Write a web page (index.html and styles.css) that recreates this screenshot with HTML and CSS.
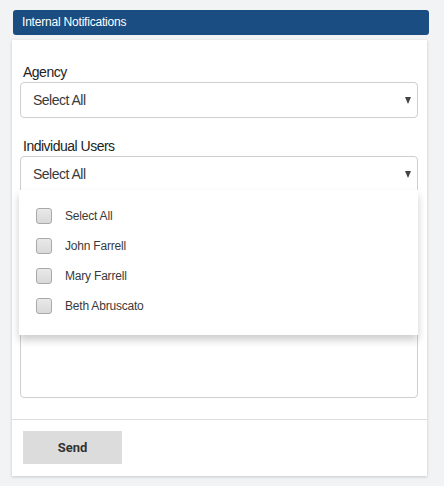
FILE: index.html
```html
<!DOCTYPE html>
<html lang="en">
<head>
    <meta charset="UTF-8">
    <meta name="viewport" content="width=device-width, initial-scale=1.0">
    <title>Internal Notifications</title>
    <link rel="stylesheet" href="styles.css">
</head>
<body>
    <div class="panel-title">Internal Notifications</div>
    <div class="card">
        <div class="card-body">
            <div class="field">
                <label class="field-label">Agency</label>
                <div class="select">
                    <span>Select All</span>
                    <span class="caret"></span>
                </div>
            </div>
            <div class="field users">
                <label class="field-label">Individual Users</label>
                <div class="select open">
                    <span>Select All</span>
                    <span class="caret"></span>
                </div>
                <div class="dropdown">
                    <label class="option"><span class="check"></span>Select All</label>
                    <label class="option"><span class="check"></span>John Farrell</label>
                    <label class="option"><span class="check"></span>Mary Farrell</label>
                    <label class="option"><span class="check"></span>Beth Abruscato</label>
                </div>
            </div>
            <div class="message"></div>
        </div>
        <div class="card-footer">
            <button type="button" class="send">Send</button>
        </div>
    </div>
</body>
</html>
```

FILE: styles.css
```css
body {
    margin: 0;
    padding: 10px 15px 10px 12px;
    background-color: #f2f3f5;
    font-family: 'Liberation Sans', Arial, sans-serif;
    color: #333;
}
.panel-title {
    margin-left: 1px;
    height: 25px;
    line-height: 25px;
    padding-left: 9px;
    background-color: #1a4d81;
    border-radius: 3px;
    color: #fff;
    font-size: 12px;
    letter-spacing: -0.2px;
}
.card {
    margin-top: 5px;
    width: 415px;
    background-color: #fff;
    box-shadow: 0 1px 3px rgba(0, 0, 0, 0.18);
}
.card-body {
    padding: 22px 9px 21px 8px;
}
.field {
    margin-bottom: 18px;
}
.field-label {
    display: block;
    padding-left: 3px;
    height: 20px;
    line-height: 20px;
    font-size: 14px;
    letter-spacing: -0.5px;
    color: #222;
}
.select {
    display: flex;
    align-items: center;
    justify-content: space-between;
    height: 34px;
    padding: 0 6px 0 12px;
    border: 1px solid #cfcfcf;
    border-radius: 4px;
    font-size: 14px;
    letter-spacing: -0.5px;
    color: #3a3a3a;
}
.select.open {
    border-bottom-left-radius: 0;
    border-bottom-right-radius: 0;
}
.caret {
    width: 0;
    height: 0;
    border-left: 3.5px solid transparent;
    border-right: 3.5px solid transparent;
    border-top: 7px solid #444;
}
.users {
    position: relative;
}
.dropdown {
    position: absolute;
    left: -1px;
    right: 0;
    top: 54px;
    padding: 11px 0 14px;
    background-color: #fff;
    box-shadow: 0 5px 8px rgba(0, 0, 0, 0.2);
    z-index: 2;
}
.option {
    display: flex;
    align-items: center;
    height: 30px;
    padding-left: 17px;
    font-size: 12px;
    letter-spacing: -0.2px;
    color: #3a3a3a;
}
.check {
    width: 14px;
    height: 14px;
    margin-right: 13px;
    border: 1px solid #a9a9a9;
    border-radius: 3px;
    background: linear-gradient(#e9e9e9, #d9d9d9);
}
.message {
    height: 186px;
    border: 1px solid #cfcfcf;
    border-radius: 4px;
}
.card-footer {
    border-top: 1px solid #ddd;
    padding: 11px 0 12px 11px;
}
.send {
    width: 99px;
    height: 33px;
    border: none;
    background-color: #dcdcdc;
    font-family: Roboto, 'Liberation Sans', sans-serif;
    font-weight: bold;
    font-size: 13px;
    color: #333;
    cursor: pointer;
}
```
